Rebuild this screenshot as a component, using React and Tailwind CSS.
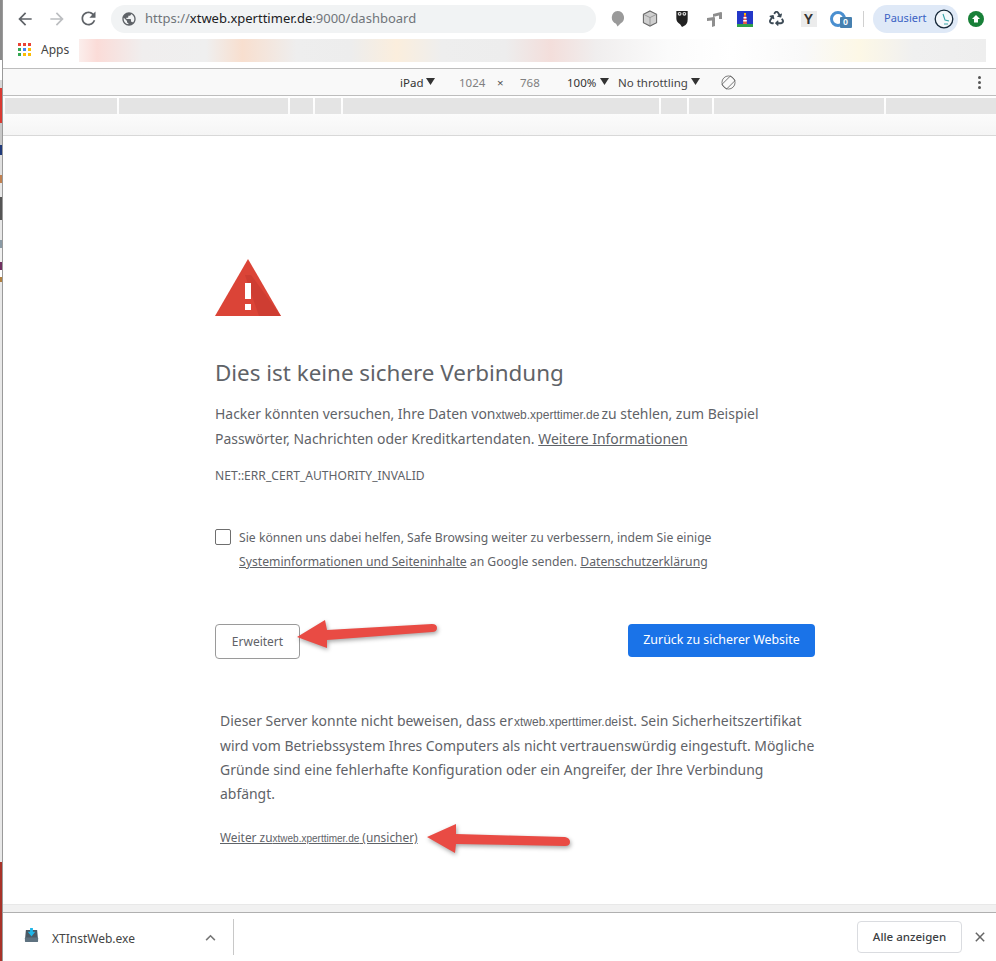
import React from 'react';
import { FaRecycle } from 'react-icons/fa';

const ui = { fontFamily: '"Noto Sans", "Open Sans", sans-serif' };
const host = { fontFamily: '"Liberation Sans", Arial, sans-serif' };

const MatIcon = ({ d, className }) => (
  <svg viewBox="0 0 24 24" className={className} fill="currentColor"><path d={d} /></svg>
);

const BACK = 'M20 11H7.83l5.59-5.59L12 4l-8 8 8 8 1.41-1.41L7.83 13H20v-2z';
const FORWARD = 'M12 4l-1.41 1.41L16.17 11H4v2h12.17l-5.58 5.59L12 20l8-8z';
const RELOAD = 'M17.65 6.35C16.2 4.9 14.21 4 12 4c-4.42 0-7.99 3.58-7.99 8s3.57 8 7.99 8c3.73 0 6.84-2.55 7.73-6h-2.08c-.82 2.33-3.04 4-5.65 4-3.31 0-6-2.69-6-6s2.69-6 6-6c1.66 0 3.14.69 4.22 1.78L13 11h7V4l-2.35 2.35z';
const GLOBE = 'M12 2C6.48 2 2 6.48 2 12s4.48 10 10 10 10-4.48 10-10S17.52 2 12 2zm-1 17.93c-3.95-.49-7-3.85-7-7.93 0-.62.08-1.21.21-1.79L9 15v1c0 1.1.9 2 2 2v1.93zm6.9-2.54c-.26-.81-1-1.39-1.9-1.39h-1v-3c0-.55-.45-1-1-1H8v-2h2c.55 0 1-.45 1-1V7h2c1.1 0 2-.9 2-2v-.41c2.93 1.19 5 4.06 5 7.41 0 2.08-.8 3.97-2.1 5.39z';

const Host = ({ className = 'text-[12px] mr-[2px]' }) => (
  <span style={host} className={className}>xtweb.xperttimer.de</span>
);

const Tri = () => (
  <svg viewBox="0 0 9 7" className="w-[9px] h-[7px] shrink-0 mb-[3px]"><path d="M0 0h9L4.500 7z" fill="#333" /></svg>
);

const Extensions = () => (
  <div className="flex items-center ml-[5px]">
    <div className="w-[33px] flex justify-center">
      <svg viewBox="0 0 16 18" className="w-[15px] h-[17px]"><path d="M8 1a7 7 0 0 1 3.500 13L8 17.500 6.500 14.500A7 7 0 0 1 8 1z" fill="#9a9a9a" /></svg>
    </div>
    <div className="w-[32px] flex justify-center">
      <svg viewBox="0 0 16 18" className="w-[16px] h-[17px]">
        <path d="M8 1l7 3.500v9L8 17l-7-3.500v-9z" fill="#cfcfcf" stroke="#666" strokeWidth="1.100" />
        <path d="M1 4.500L8 8l7-3.500M8 8v9" fill="none" stroke="#888" strokeWidth="0.800" />
      </svg>
    </div>
    <div className="w-[32px] flex justify-center">
      <svg viewBox="0 0 12 18" className="w-[12px] h-[17px]">
        <path d="M0 1h12v9q0 5-4 7l-2 1-2-3q-4-2-4-6z" fill="#222" />
        <circle cx="3.500" cy="4" r="2" fill="#ddd" /><circle cx="8.500" cy="4" r="2" fill="#ddd" />
        <circle cx="3.500" cy="4" r="0.800" fill="#222" /><circle cx="8.500" cy="4" r="0.800" fill="#222" />
      </svg>
    </div>
    <div className="w-[31px] flex justify-center">
      <svg viewBox="0 0 16 16" className="w-[16px] h-[16px]">
        <path d="M7 3l8-2q1 0 1 1v6h-3V4.500L7 6zM1 7l7-1q1 0 1 1v8l-3 1V9.500L1 10z" fill="#8e8e8e" />
      </svg>
    </div>
    <div className="w-[32px] flex justify-center">
      <svg viewBox="0 0 16 16" className="w-[16px] h-[16px]">
        <rect width="16" height="16" fill="#2438c8" />
        <rect y="13" width="16" height="3" fill="#2fa04a" />
        <path d="M6 13l1-9h2l1 9z" fill="#ea5a47" />
        <rect x="6.500" y="6" width="3" height="1.500" fill="#fff" />
        <rect x="6.200" y="9" width="3.600" height="1.500" fill="#fff" />
        <rect x="7" y="2" width="2" height="2" fill="#fbbc04" />
      </svg>
    </div>
    <div className="w-[31px] flex justify-center">
      <FaRecycle className="w-[15px] h-[15px] text-[#3c4a55]" />
    </div>
    <div className="w-[33px] flex justify-center">
      <div style={host} className="w-[16px] h-[16px] bg-[#ececec] flex items-center justify-center text-[14px] font-bold text-[#333] leading-none">Y</div>
    </div>
    <div className="w-[33px] flex justify-center">
      <div className="relative w-[16px] h-[16px] mr-[8px]">
        <div className="w-[16px] h-[16px] rounded-full border-[3px] border-[#4a8fd0]" />
        <div style={host} className="absolute left-[10px] top-[6px] w-[12px] h-[11px] bg-[#4680b0] rounded-[1px] text-white text-[9px] font-bold leading-[11px] text-center">0</div>
      </div>
    </div>
    <div className="w-[1px] h-[16px] bg-[#d0d0d0] ml-[5px]" />
    <div className="ml-[9px] w-[85px] h-[28px] rounded-full bg-[#dfe9f7] flex items-center pl-[11px]">
      <span style={ui} className="w-[42px] text-[11px] text-[#3b62c4]">Pausiert</span>
      <svg viewBox="0 0 20 20" className="w-[20px] h-[20px] ml-[8px]">
        <circle cx="10" cy="10" r="8.800" fill="#f4f8fc" stroke="#16283a" strokeWidth="1.300" />
        <path d="M9 5l2 6 4 1M10 15h4" fill="none" stroke="#36a3a8" strokeWidth="1.100" />
      </svg>
    </div>
    <div className="ml-[10px] w-[16px] h-[16px] rounded-full bg-[#188038] flex items-center justify-center">
      <svg viewBox="0 0 10 10" className="w-[10px] h-[10px]"><path d="M5 1l4 4H7v3.500H3V5H1z" fill="#fff" /></svg>
    </div>
  </div>
);

const Toolbar = () => (
  <div className="h-[36px] flex items-center pt-[1px] bg-white">
    <MatIcon d={BACK} className="w-[20px] h-[20px] ml-[12px] text-[#5f6368]" />
    <MatIcon d={FORWARD} className="w-[20px] h-[20px] ml-[12px] text-[#bcbec1]" />
    <MatIcon d={RELOAD} className="w-[21px] h-[21px] ml-[11px] text-[#5f6368]" />
    <div className="ml-[12px] w-[485px] h-[28px] rounded-full bg-[#f1f3f4] flex items-center pl-[10px]">
      <MatIcon d={GLOBE} className="w-[16px] h-[16px] text-[#5f6368]" />
      <span style={ui} className="ml-[8px] text-[13px] text-[#70757a]">
        https://<span className="text-[#202124]">xtweb.xperttimer.de</span>:9000/dashboard
      </span>
    </div>
    <Extensions />
  </div>
);

const BookmarkBar = () => (
  <div className="h-[32px] flex items-start pt-[3px] bg-white">
    <div className="mt-[4px] ml-[15px] w-[13px] h-[13px] grid grid-cols-3 gap-[2px]">
      {['#ea4335', '#ea4335', '#ea4335', '#34a853', '#4285f4', '#fbbc04', '#34a853', '#fbbc04', '#fbbc04'].map((c, i) => (
        <div key={i} style={{ backgroundColor: c }} />
      ))}
    </div>
    <span style={ui} className="ml-[10px] mt-[2px] text-[12px] text-[#444]">Apps</span>
    <div className="ml-[10px] w-[907px] h-[23px] overflow-hidden bg-[linear-gradient(90deg,#fbeeec_0%,#fbdcd8_2%,#f0eeee_7%,#efefef_14%,#f8dfcf_18%,#eeeeee_24%,#ededed_30%,#fbeedd_35%,#eeeeee_40%,#ededed_47%,#f3dedb_52%,#f0eeee_57%,#fbfbfb_65%,#ffffff_72%,#f9f9f9_80%,#fdf8e6_86%,#f0f0f0_92%,#eeeeee_100%)]" />
  </div>
);

const DeviceBar = () => (
  <div style={ui} className="h-[24px] flex items-center pt-[2px] bg-[#f9f9f9] border-t border-b border-[#bdbdbd] box-content text-[11.500px] text-[#333]">
    <span className="ml-[397px] w-[26px]">iPad</span>
    <Tri />
    <span className="ml-[24px] w-[38px] text-[#808080]">1024</span>
    <span className="w-[23px] text-[#555]">×</span>
    <span className="w-[47px] text-[#808080]">768</span>
    <span className="w-[33px]">100%</span>
    <Tri />
    <span className="ml-[9px] w-[73px] text-[#444]">No throttling</span>
    <Tri />
    <svg viewBox="0 0 16 16" className="ml-[21px] mb-[2px] w-[15px] h-[15px]" fill="none" stroke="#666" strokeWidth="0.900">
      <circle cx="8" cy="8" r="7" />
      <rect x="4.500" y="1.500" width="7" height="13" rx="1" transform="rotate(45 8 8)" />
    </svg>
    <div className="ml-[242px] mb-[2px] flex flex-col gap-[2px]">
      <div className="w-[3px] h-[3px] rounded-full bg-[#555]" />
      <div className="w-[3px] h-[3px] rounded-full bg-[#555]" />
      <div className="w-[3px] h-[3px] rounded-full bg-[#555]" />
    </div>
  </div>
);

const RULER = [112, 169, 23, 26, 316, 26, 23, 170, 110];

const Ruler = () => (
  <div className="h-[40px] border-b border-[#d8d8d8] bg-[linear-gradient(180deg,#ffffff_0%,#fbfbfb_50%,#f5f5f5_100%)] pt-[2px] pl-[2px]">
    <div className="flex gap-[2px] h-[16px]">
      {RULER.map((w, i) => <div key={i} className="bg-[#e4e4e4]" style={{ width: w }} />)}
    </div>
  </div>
);

const Page = () => (
  <div style={ui} className="flex-1 pl-[212px] pt-[123px] bg-white text-[#5f6368] overflow-hidden">
    <svg viewBox="0 0 66 57" className="w-[66px] h-[57px]">
      <path d="M33 0l33 57H0z" fill="#db4437" />
      <path d="M30 16l6 0 30 41H44z" fill="#c5392e" opacity="0.600" />
      <rect x="30" y="24" width="6" height="16" fill="#fff" />
      <rect x="30" y="45" width="6" height="6" fill="#fff" />
    </svg>
    <h1 className="mt-[41px] text-[22.400px] leading-[32px] font-normal text-[#5f6368]">Dies ist keine sichere Verbindung</h1>
    <p className="mt-[13px] w-[600px] text-[13.950px] leading-[24px]">
      Hacker könnten versuchen, Ihre Daten von<Host />zu stehlen, zum Beispiel<br />
      Passwörter, Nachrichten oder Kreditkartendaten. <u>Weitere Informationen</u>
    </p>
    <p className="mt-[17px] text-[12.100px] leading-[16px]">NET::ERR_CERT_AUTHORITY_INVALID</p>
    <div className="mt-[44px] flex gap-[8px]">
      <div className="w-[16px] h-[16px] mt-[1px] rounded-[2px] border border-[#6e6e6e] bg-white" />
      <p className="text-[12.200px] leading-[24px] -mt-[2px]">
        Sie können uns dabei helfen, Safe Browsing weiter zu verbessern, indem Sie einige<br />
        <u>Systeminformationen und Seiteninhalte</u> an Google senden. <u>Datenschutzerklärung</u>
      </p>
    </div>
    <div className="mt-[50px] w-[600px] flex justify-between items-start">
      <button className="w-[85px] h-[35px] rounded-[4px] border border-[#9a9a9a] bg-white text-[12px] text-[#5f6368]">Erweitert</button>
      <button className="w-[187px] h-[33px] rounded-[4px] bg-[#1a73e8] text-white text-[12.400px]">Zurück zu sicherer Website</button>
    </div>
    <p className="mt-[50px] ml-[5px] w-[600px] text-[13.950px] leading-[24px]">
      Dieser Server konnte nicht beweisen, dass er<Host className="text-[12px] ml-[1px]" />ist. Sein Sicherheitszertifikat<br />
      wird vom Betriebssystem Ihres Computers als nicht vertrauenswürdig eingestuft. Mögliche<br />
      Gründe sind eine fehlerhafte Konfiguration oder ein Angreifer, der Ihre Verbindung<br />
      abfängt.
    </p>
    <p className="mt-[19px] ml-[5px] text-[11.900px] leading-[24px]">
      <u>Weiter zu<Host className="text-[10px]" /> (unsicher)</u>
    </p>
  </div>
);

const DownloadBar = () => (
  <div className="h-[57px] shrink-0 bg-white">
    <div className="h-[8px] bg-[#f1f1f1] border-t border-[#e8e8e8]" />
    <div style={ui} className="h-[49px] border-t border-[#b0b0b0] flex items-center">
      <svg viewBox="0 0 16 16" className="w-[15px] h-[15px] ml-[21px] mb-[3px]">
        <path d="M2 2h12l1 11H1z" fill="#4a5a66" />
        <rect x="1" y="10" width="14" height="5" rx="1" fill="#5e7280" />
        <path d="M6.500 0h3v4H12L8 9 4 4h2.500z" fill="#1fb6e8" />
      </svg>
      <span className="ml-[13px] mt-[4px] w-[153px] text-[12px] text-[#444]">XTInstWeb.exe</span>
      <svg viewBox="0 0 12 8" className="w-[11px] h-[7px]" fill="none" stroke="#777" strokeWidth="1.800"><path d="M1 7l5-5 5 5" /></svg>
      <div className="ml-[17px] w-[1px] h-[36px] bg-[#c8c8c8]" />
      <button className="ml-[623px] w-[105px] h-[32px] rounded-[4px] border border-[#dadce0] bg-white text-[11.500px] font-medium text-[#3c4043]">Alle anzeigen</button>
      <svg viewBox="0 0 12 12" className="ml-[13px] w-[10px] h-[10px]" stroke="#666" strokeWidth="1.800"><path d="M1 1l10 10M11 1L1 11" /></svg>
    </div>
  </div>
);

const Arrows = () => (
  <svg viewBox="0 0 996 961" className="absolute inset-0 w-[996px] h-[961px] pointer-events-none drop-shadow-[1px_2px_2px_rgba(0,0,0,0.35)]">
    <path d="M297 637L325 620 327 630 432 624Q437 624 437 628 437 632 432 632L327 640 327 648z" fill="#e94b44" />
    <path d="M427 837L456 824 456 834 565 837Q570 838 570 842 570 846 565 846L456 844 455 853z" fill="#e94b44" />
  </svg>
);

const SIDE = [
  [20, '#ffffff'], [8, '#d8d8d8'], [35, '#d93a32'], [22, '#c8c8c8'], [10, '#203a7a'], [20, '#e0e0e0'], [8, '#c08050'],
  [14, '#e8e8e8'], [23, '#555555'], [20, '#e8e8e8'], [8, '#8a9aa5'], [14, '#f0f0f0'], [8, '#703060'], [7, '#ffffff'], [5, '#b08040'],
];

export default function App() {
  return (
    <div className="relative w-[996px] h-[961px] overflow-hidden flex bg-white">
      <div className="w-[2px] shrink-0 flex flex-col bg-[#a83228]">
        <div className="h-[60px] bg-[#8a8a8a]" />
        {SIDE.map(([h, c], i) => <div key={i} style={{ height: h, backgroundColor: c }} />)}
        <div className="h-[580px] bg-[#e8e8e8]" />
      </div>
      <div className="w-[1px] shrink-0 bg-[#9a9a9a]" />
      <div className="flex-1 flex flex-col min-w-0">
        <Toolbar />
        <BookmarkBar />
        <DeviceBar />
        <Ruler />
        <Page />
        <DownloadBar />
      </div>
      <Arrows />
    </div>
  );
}
